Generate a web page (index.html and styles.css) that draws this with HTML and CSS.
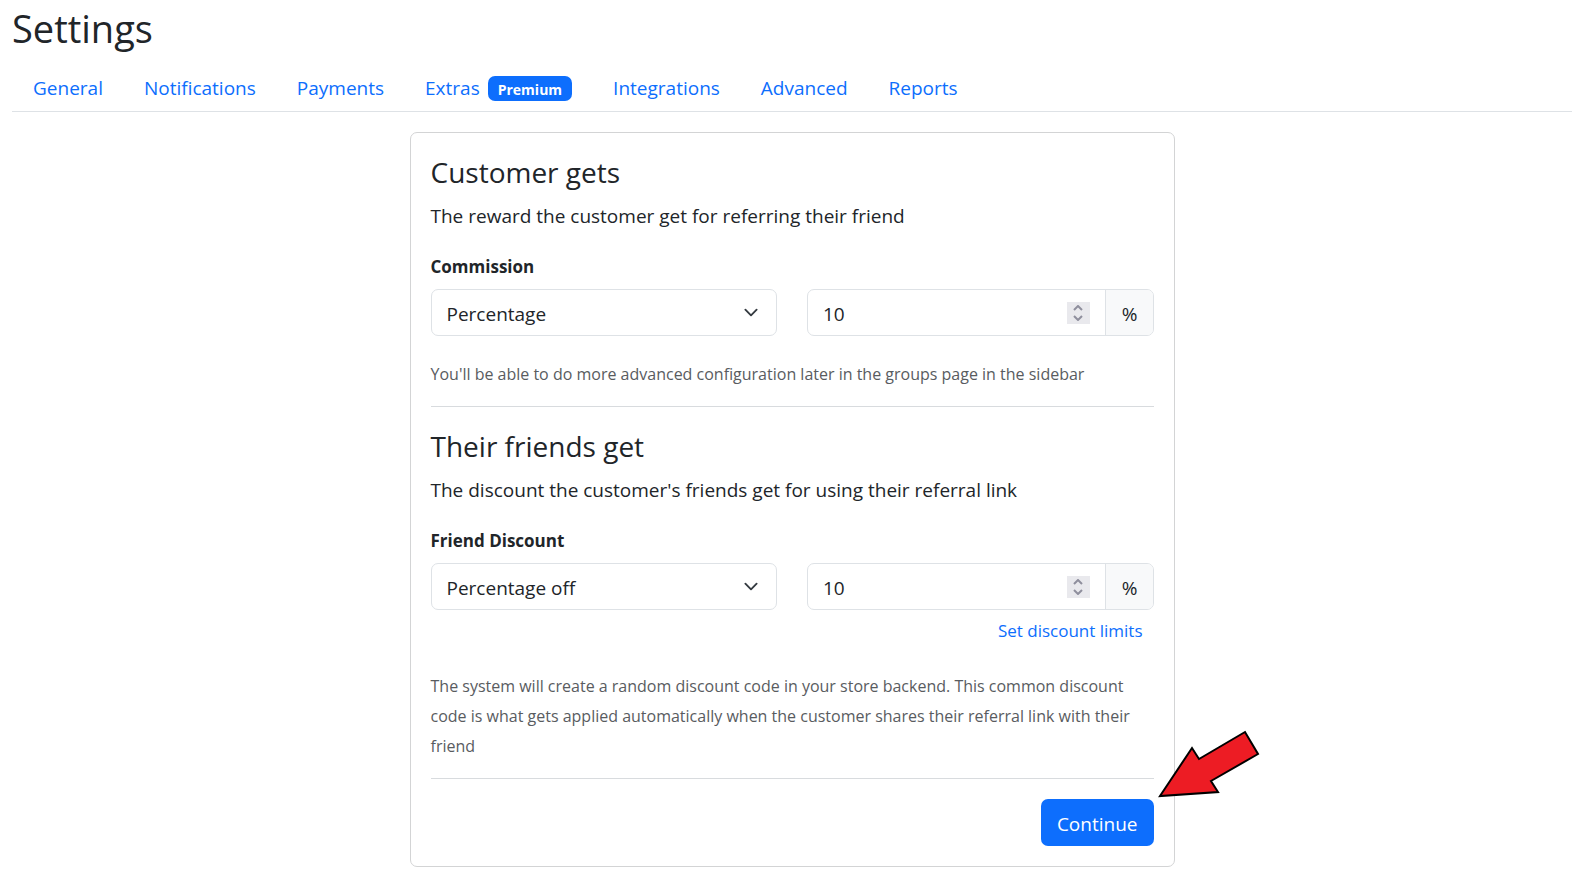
FILE: index.html
```html
<!DOCTYPE html>
<html lang="en">
<head>
<meta charset="utf-8">
<meta name="viewport" content="width=device-width, initial-scale=1">
<title>Settings</title>
<link rel="stylesheet" href="styles.css">
</head>
<body>
<h1 class="page-title">Settings</h1>
<nav class="tabs" aria-label="Settings sections">
  <a class="tab" href="#general">General</a>
  <a class="tab" href="#notifications">Notifications</a>
  <a class="tab" href="#payments">Payments</a>
  <a class="tab" href="#extras">Extras <span class="badge">Premium</span></a>
  <a class="tab" href="#integrations">Integrations</a>
  <a class="tab" href="#advanced">Advanced</a>
  <a class="tab" href="#reports">Reports</a>
</nav>
<main>
  <form class="card">
    <section>
      <h2 class="section-title">Customer gets</h2>
      <p class="lead">The reward the customer get for referring their friend</p>
      <label class="field-label" for="commission-type">Commission</label>
      <div class="field-row">
        <select class="select" id="commission-type"><option>Percentage</option></select>
        <div class="input-group">
          <input class="number" type="number" value="10" aria-label="Commission amount">
          <span class="stepper">
            <button class="step" type="button" aria-label="Increase"><svg viewBox="0 0 10 6"><path d="M1 5l4-4 4 4"/></svg></button>
            <button class="step" type="button" aria-label="Decrease"><svg viewBox="0 0 10 6"><path d="M1 1l4 4 4-4"/></svg></button>
          </span>
          <span class="unit">%</span>
        </div>
      </div>
      <p class="help">You'll be able to do more advanced configuration later in the groups page in the sidebar</p>
    </section>
    <hr class="divider">
    <section>
      <h2 class="section-title">Their friends get</h2>
      <p class="lead">The discount the customer's friends get for using their referral link</p>
      <label class="field-label" for="discount-type">Friend Discount</label>
      <div class="field-row">
        <select class="select" id="discount-type"><option>Percentage off</option></select>
        <div class="input-group">
          <input class="number" type="number" value="10" aria-label="Discount amount">
          <span class="stepper">
            <button class="step" type="button" aria-label="Increase"><svg viewBox="0 0 10 6"><path d="M1 5l4-4 4 4"/></svg></button>
            <button class="step" type="button" aria-label="Decrease"><svg viewBox="0 0 10 6"><path d="M1 1l4 4 4-4"/></svg></button>
          </span>
          <span class="unit">%</span>
        </div>
      </div>
      <div class="limits"><a class="limits-link" href="#limits">Set discount limits</a></div>
      <p class="help">The system will create a random discount code in your store backend. This common discount code is what gets applied automatically when the customer shares their referral link with their friend</p>
    </section>
    <hr class="divider">
    <div class="actions">
      <button class="continue" type="submit">Continue</button>
      <svg class="arrow" viewBox="0 0 104 70" aria-hidden="true"><path d="M3 66L35 18L42 29L88 2L101 24L54 51L61 62Z"/></svg>
    </div>
  </form>
</main>
</body>
</html>
```

FILE: styles.css
```css
* { box-sizing: border-box; }

body {
  margin: 0;
  padding: 4px 8px 8px 12px;
  background: #fff;
  color: #212529;
  font: 19px/30px "Open Sans", "Noto Sans", sans-serif;
}

h1, h2, p { margin: 0; }

.page-title {
  font-size: 38px;
  font-weight: 400;
  line-height: 48px;
}

.tabs {
  display: flex;
  margin-top: 10px;
  padding-left: 1px;
  border-bottom: 1px solid #dee2e6;
}

.tab {
  display: flex;
  align-items: center;
  gap: 8px;
  padding: 11px 21px 8px 20px;
  color: #0d6efd;
  text-decoration: none;
}

.badge {
  padding: 6px 10px 4px;
  border-radius: 7px;
  background: #0d6efd;
  color: #fff;
  font-size: 14px;
  font-weight: 700;
  line-height: 15px;
}

.card {
  max-width: 765px;
  margin: 20px auto 0;
  padding: 20px;
  border: 1px solid #d3d4d5;
  border-radius: 7px;
}

.section-title {
  font-size: 28px;
  font-weight: 400;
  line-height: 38px;
}

.lead { margin-top: 10px; }

.field-label {
  display: block;
  margin-top: 24px;
  font-size: 17px;
  font-weight: 700;
  line-height: 24px;
}

.field-row {
  display: grid;
  grid-template-columns: 1fr 1fr;
  gap: 30px;
  margin-top: 10px;
}

.select, .input-group {
  width: 100%;
  height: 47px;
  border: 1px solid #dee2e6;
  border-radius: 7px;
  background-color: #fff;
}

.select {
  padding: 2px 45px 0 15px;
  appearance: none;
  background-image: url("data:image/svg+xml,%3Csvg xmlns='http://www.w3.org/2000/svg' viewBox='0 0 16 16'%3E%3Cpath fill='none' stroke='%23343a40' stroke-linecap='round' stroke-linejoin='round' stroke-width='2' d='m2 5 6 6 6-6'/%3E%3C/svg%3E");
  background-position: right 15px center;
  background-repeat: no-repeat;
  background-size: 20px 15px;
  color: inherit;
  font: inherit;
}

.input-group {
  display: flex;
  align-items: center;
  overflow: hidden;
}

.number {
  flex: 1;
  align-self: stretch;
  min-width: 0;
  padding: 2px 15px 0;
  border: 0;
  appearance: textfield;
  background: none;
  color: inherit;
  font: inherit;
}

.number::-webkit-inner-spin-button { display: none; }

.stepper {
  display: flex;
  flex-direction: column;
  width: 23px;
  height: 22px;
  padding: 1px 0;
  margin-right: 15px;
  background: #e9e9ed;
}

.step {
  display: flex;
  flex: 1;
  align-items: center;
  justify-content: center;
  padding: 0;
  border: 0;
  background: none;
}

.step svg {
  width: 10px;
  height: 6px;
  fill: none;
  stroke: #8f8f9d;
  stroke-width: 2;
}

.unit {
  display: flex;
  align-items: center;
  align-self: stretch;
  padding: 2px 15px 0 16px;
  border-left: 1px solid #dee2e6;
  background: #f8f9fa;
}

.help {
  margin-top: 23px;
  color: #595c5f;
  font-size: 16px;
}

.divider {
  margin: 17px 0 20px;
  border: 0;
  border-top: 1px solid #d8dbde;
}

.limits {
  padding: 5px 11px 2px;
  text-align: right;
}

.limits-link {
  color: #0d6efd;
  font-size: 17px;
  text-decoration: none;
}

.actions {
  position: relative;
  display: flex;
  justify-content: flex-end;
}

.continue {
  height: 47px;
  padding: 2px 16px 0;
  border: 0;
  border-radius: 7px;
  background: #0d6efd;
  color: #fff;
  font: inherit;
}

/* Pointer laid over the card edge, aimed at the button */
.arrow {
  position: absolute;
  top: -69px;
  right: -107px;
  width: 104px;
  height: 70px;
  fill: #ed1c24;
  stroke: #000;
  stroke-width: 2;
}
```
